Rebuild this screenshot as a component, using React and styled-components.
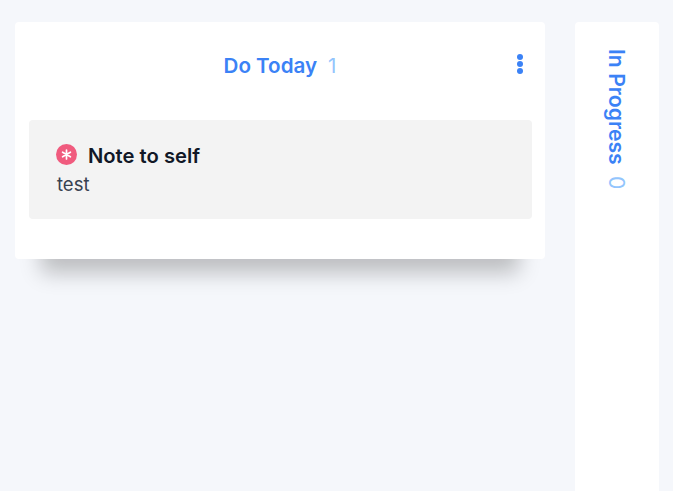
import React from 'react'
import styled, { createGlobalStyle } from 'styled-components'

const GlobalStyle = createGlobalStyle`
	html, body {
		margin: 0;
		height: 100%;
		overflow: hidden;
		background: #f5f7fb;
		font-family: Inter, 'Liberation Sans', sans-serif;
	}
`
const Board = styled.div`
	display: flex;
	align-items: stretch;
	gap: 30px;
	height: 100vh;
	box-sizing: border-box;
	padding: 22px 14px 0 15px;
`
const Column = styled.section`
	width: 530px;
	height: 237px;
	box-sizing: border-box;
	padding: 0 13px 0 14px;
	background: white;
	border-radius: 4px;
	box-shadow: 0 40px 20px -26px rgba(0, 0, 0, 0.23);
`
const ColumnHeader = styled.header`
	position: relative;
	height: 98px;
	display: flex;
	justify-content: center;
	align-items: flex-start;
	gap: 11px;
	box-sizing: border-box;
	padding: 30px 1px 0 0;
`
const Title = styled.h2`
	margin: 0;
	font-size: 20.6px;
	line-height: 28px;
	font-weight: 600;
	color: #3b82f6;
`
const Count = styled.span`
	font-size: 20.6px;
	line-height: 28px;
	font-weight: 400;
	color: #93c5fd;
`
const MenuButton = styled.button`
	position: absolute;
	right: 4px;
	top: 29px;
	width: 16px;
	height: 26px;
	padding: 0;
	border: 0;
	background: none;
	display: flex;
	flex-direction: column;
	align-items: center;
	justify-content: center;
	gap: 1px;
`
const Dot = styled.i`
	display: block;
	width: 6px;
	height: 6px;
	border-radius: 50%;
	background: #3b82f6;
`
const Note = styled.article`
	height: 99px;
	box-sizing: border-box;
	padding: 23px 27px 0;
	background: #f3f3f3;
	border-radius: 4px;
`
const NoteTitleRow = styled.div`
	display: flex;
	align-items: center;
	gap: 11px;
	height: 26px;
`
const NoteTitle = styled.h3`
	margin: 0;
	font-size: 20.2px;
	line-height: 26px;
	font-weight: 600;
	color: #111827;
`
const NoteText = styled.p`
	margin: 3px 0 0 1px;
	font-size: 18.5px;
	line-height: 24px;
	font-weight: 400;
	color: #374151;
`
const CollapsedColumn = styled.section`
	width: 84px;
	box-sizing: border-box;
	padding-top: 27px;
	background: white;
	border-radius: 4px 4px 0 0;
	display: flex;
	justify-content: center;
`
const VerticalTitle = styled.h2`
	margin: 0;
	writing-mode: vertical-rl;
	display: flex;
	align-items: center;
	gap: 11px;
	height: fit-content;
	font-size: 21.2px;
	line-height: 24px;
	font-weight: 600;
	color: #3b82f6;
	span {
		font-weight: 400;
		color: #93c5fd;
	}
`

function AsteriskBadge() {
	return (
		<svg width='21' height='21' viewBox='0 0 21 21' aria-hidden='true' style={{ marginTop: -4 }}>
			<circle cx='10.5' cy='10.5' r='10.5' fill='#f05b7e' />
			<path
				d='M10.5 6v9M6.6 8.25l7.8 4.5M14.4 8.25l-7.8 4.5'
				stroke='white'
				strokeWidth='1.7'
				strokeLinecap='round'
			/>
		</svg>
	)
}

export default function App() {
	return (
		<>
			<GlobalStyle />
			<Board>
				<Column>
					<ColumnHeader>
						<Title>Do Today</Title>
						<Count>1</Count>
						<MenuButton aria-label='Column menu'>
							<Dot />
							<Dot />
							<Dot />
						</MenuButton>
					</ColumnHeader>
					<Note>
						<NoteTitleRow>
							<AsteriskBadge />
							<NoteTitle>Note to self</NoteTitle>
						</NoteTitleRow>
						<NoteText>test</NoteText>
					</Note>
				</Column>
				<CollapsedColumn>
					<VerticalTitle>
						In Progress <span>0</span>
					</VerticalTitle>
				</CollapsedColumn>
			</Board>
		</>
	)
}
